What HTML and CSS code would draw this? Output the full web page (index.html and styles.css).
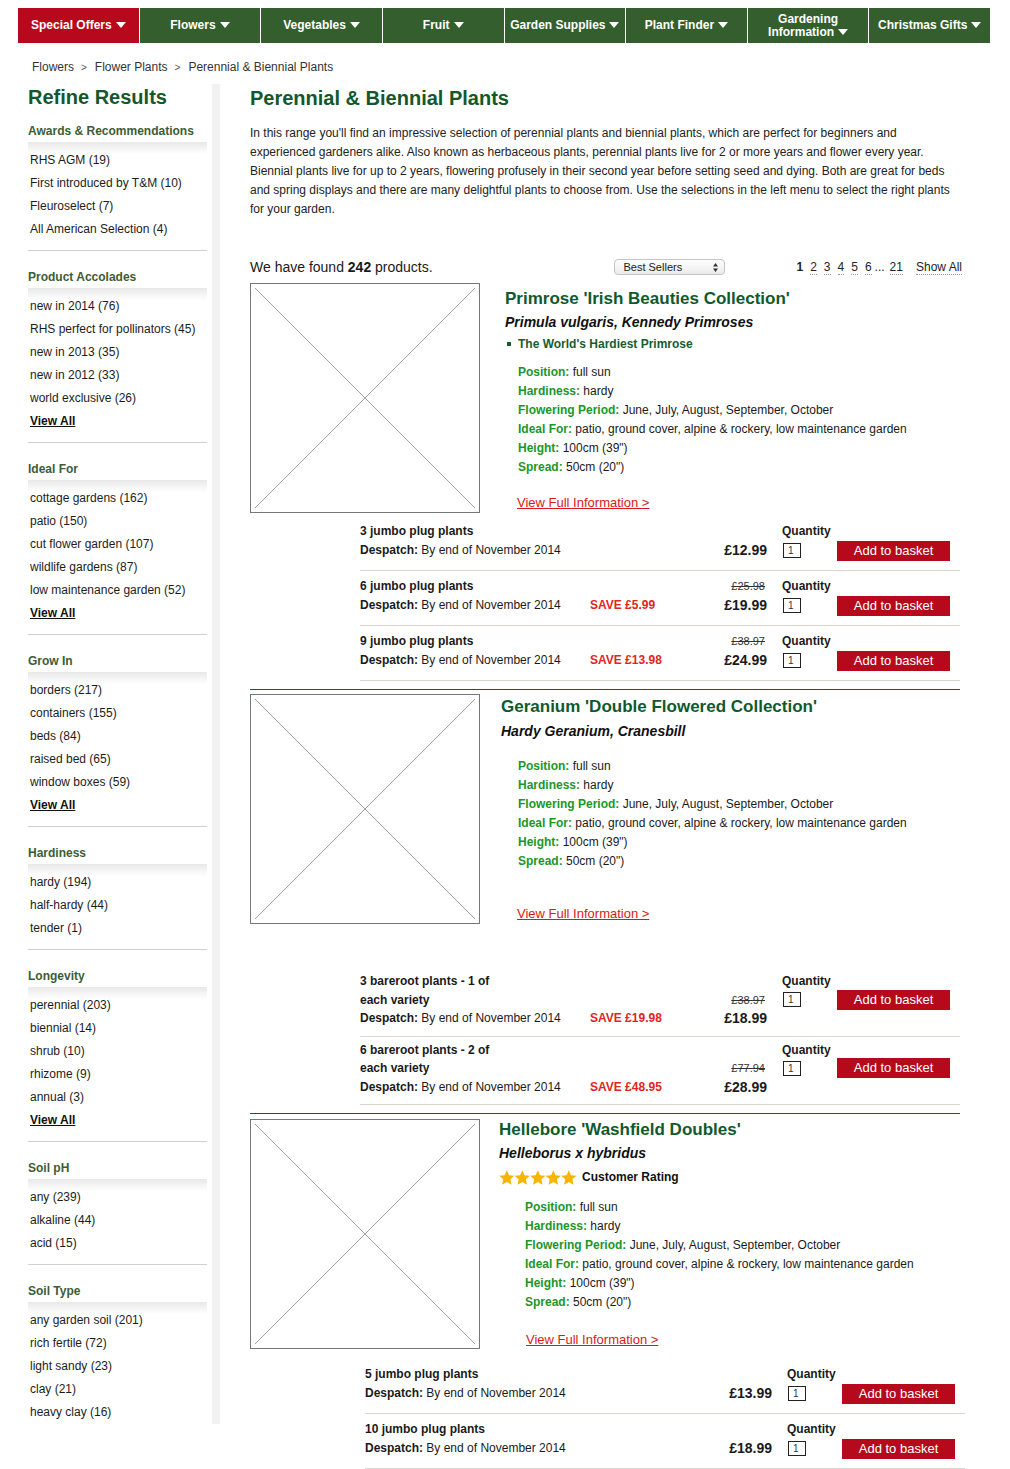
FILE: index.html
```html
<!DOCTYPE html>
<html lang="en">
<head>
<meta charset="utf-8">
<title>Perennial &amp; Biennial Plants</title>
<link rel="stylesheet" href="styles.css">
</head>
<body>
<nav class="topnav">
  <a class="nav-item nav-item--offer" href="#"><span class="nav-label">Special Offers<svg class="caret" viewBox="0 0 10 6"><path d="M0 0h10L5 6z"/></svg></span></a>
  <a class="nav-item" href="#"><span class="nav-label">Flowers<svg class="caret" viewBox="0 0 10 6"><path d="M0 0h10L5 6z"/></svg></span></a>
  <a class="nav-item" href="#"><span class="nav-label">Vegetables<svg class="caret" viewBox="0 0 10 6"><path d="M0 0h10L5 6z"/></svg></span></a>
  <a class="nav-item" href="#"><span class="nav-label">Fruit<svg class="caret" viewBox="0 0 10 6"><path d="M0 0h10L5 6z"/></svg></span></a>
  <a class="nav-item" href="#"><span class="nav-label">Garden Supplies<svg class="caret" viewBox="0 0 10 6"><path d="M0 0h10L5 6z"/></svg></span></a>
  <a class="nav-item" href="#"><span class="nav-label">Plant Finder<svg class="caret" viewBox="0 0 10 6"><path d="M0 0h10L5 6z"/></svg></span></a>
  <a class="nav-item" href="#"><span class="nav-label">Gardening <span class="nowrap">Information<svg class="caret" viewBox="0 0 10 6"><path d="M0 0h10L5 6z"/></svg></span></span></a>
  <a class="nav-item" href="#"><span class="nav-label">Christmas Gifts<svg class="caret" viewBox="0 0 10 6"><path d="M0 0h10L5 6z"/></svg></span></a>
</nav>

<div class="breadcrumb">
  <a href="#">Flowers</a><span class="crumb-sep">&gt;</span><a href="#">Flower Plants</a><span class="crumb-sep">&gt;</span><span>Perennial &amp; Biennial Plants</span>
</div>

<div class="layout">
  <aside class="sidebar">
    <h2 class="sidebar-title">Refine Results</h2>

    <section class="facet">
      <h3 class="facet-title">Awards &amp; Recommendations</h3>
      <ul class="facet-list">
        <li>RHS AGM (19)</li>
        <li>First introduced by T&amp;M (10)</li>
        <li>Fleuroselect (7)</li>
        <li>All American Selection (4)</li>
      </ul>
    </section>

    <section class="facet">
      <h3 class="facet-title">Product Accolades</h3>
      <ul class="facet-list">
        <li>new in 2014 (76)</li>
        <li>RHS perfect for pollinators (45)</li>
        <li>new in 2013 (35)</li>
        <li>new in 2012 (33)</li>
        <li>world exclusive (26)</li>
        <li><a class="view-all" href="#">View All</a></li>
      </ul>
    </section>

    <section class="facet">
      <h3 class="facet-title">Ideal For</h3>
      <ul class="facet-list">
        <li>cottage gardens (162)</li>
        <li>patio (150)</li>
        <li>cut flower garden (107)</li>
        <li>wildlife gardens (87)</li>
        <li>low maintenance garden (52)</li>
        <li><a class="view-all" href="#">View All</a></li>
      </ul>
    </section>

    <section class="facet">
      <h3 class="facet-title">Grow In</h3>
      <ul class="facet-list">
        <li>borders (217)</li>
        <li>containers (155)</li>
        <li>beds (84)</li>
        <li>raised bed (65)</li>
        <li>window boxes (59)</li>
        <li><a class="view-all" href="#">View All</a></li>
      </ul>
    </section>

    <section class="facet">
      <h3 class="facet-title">Hardiness</h3>
      <ul class="facet-list">
        <li>hardy (194)</li>
        <li>half-hardy (44)</li>
        <li>tender (1)</li>
      </ul>
    </section>

    <section class="facet">
      <h3 class="facet-title">Longevity</h3>
      <ul class="facet-list">
        <li>perennial (203)</li>
        <li>biennial (14)</li>
        <li>shrub (10)</li>
        <li>rhizome (9)</li>
        <li>annual (3)</li>
        <li><a class="view-all" href="#">View All</a></li>
      </ul>
    </section>

    <section class="facet">
      <h3 class="facet-title">Soil pH</h3>
      <ul class="facet-list">
        <li>any (239)</li>
        <li>alkaline (44)</li>
        <li>acid (15)</li>
      </ul>
    </section>

    <section class="facet">
      <h3 class="facet-title">Soil Type</h3>
      <ul class="facet-list">
        <li>any garden soil (201)</li>
        <li>rich fertile (72)</li>
        <li>light sandy (23)</li>
        <li>clay (21)</li>
        <li>heavy clay (16)</li>
      </ul>
    </section>
  </aside>

  <main class="content">
    <h1 class="page-title">Perennial &amp; Biennial Plants</h1>
    <p class="intro">In this range you'll find an impressive selection of perennial plants and biennial plants, which are perfect for beginners and experienced gardeners alike. Also known as herbaceous plants, perennial plants live for 2 or more years and flower every year. Biennial plants live for up to 2 years, flowering profusely in their second year before setting seed and dying. Both are great for beds and spring displays and there are many delightful plants to choose from. Use the selections in the left menu to select the right plants for your garden.</p>

    <div class="toolbar">
      <div class="result-count">We have found <b>242</b> products.</div>
      <div class="sort-select"><span>Best Sellers</span><svg class="sort-arrows" viewBox="0 0 5 9"><path d="M0 3.5L2.5 0 5 3.5z M0 5.5L2.5 9 5 5.5z"/></svg></div>
      <div class="pager">
        <span class="pg-current">1</span>
        <a class="pg-link" href="#">2</a>
        <a class="pg-link" href="#">3</a>
        <a class="pg-link" href="#">4</a>
        <a class="pg-link" href="#">5</a>
        <a class="pg-link" href="#">6</a>
        <span class="pg-dots">...</span>
        <a class="pg-link" href="#">21</a>
        <a class="pg-link pg-all" href="#">Show All</a>
      </div>
    </div>

    <!-- Product 1 -->
    <article class="product product--a">
      <div class="product-main">
        <div class="product-img"><svg viewBox="0 0 222 222" preserveAspectRatio="none"><line x1="1" y1="1" x2="221" y2="221"/><line x1="221" y1="1" x2="1" y2="221"/></svg></div>
        <div class="product-info">
          <h2 class="product-title">Primrose 'Irish Beauties Collection'</h2>
          <p class="product-latin">Primula vulgaris, Kennedy Primroses</p>
          <ul class="features"><li>The World's Hardiest Primrose</li></ul>
          <div class="specs">
            <div><span class="spec-label">Position:</span> full sun</div>
            <div><span class="spec-label">Hardiness:</span> hardy</div>
            <div><span class="spec-label">Flowering Period:</span> June, July, August, September, October</div>
            <div><span class="spec-label">Ideal For:</span> patio, ground cover, alpine &amp; rockery, low maintenance garden</div>
            <div><span class="spec-label">Height:</span> 100cm (39")</div>
            <div><span class="spec-label">Spread:</span> 50cm (20")</div>
          </div>
          <a class="more-link" href="#">View Full Information &gt;</a>
        </div>
      </div>
      <div class="options">
        <div class="option">
          <div class="opt-name">3 jumbo plug plants</div>
          <div class="opt-despatch"><b>Despatch:</b> By end of November 2014</div>
          <div class="opt-price">£12.99</div>
          <div class="opt-qty-label">Quantity</div>
          <div class="opt-qty"><span class="qty-box">1</span></div>
          <div class="opt-buy"><button class="btn-basket">Add to basket</button></div>
        </div>
        <div class="option">
          <div class="opt-name">6 jumbo plug plants</div>
          <div class="opt-despatch"><b>Despatch:</b> By end of November 2014</div>
          <div class="opt-save">SAVE £5.99</div>
          <div class="opt-was">£25.98</div>
          <div class="opt-price">£19.99</div>
          <div class="opt-qty-label">Quantity</div>
          <div class="opt-qty"><span class="qty-box">1</span></div>
          <div class="opt-buy"><button class="btn-basket">Add to basket</button></div>
        </div>
        <div class="option">
          <div class="opt-name">9 jumbo plug plants</div>
          <div class="opt-despatch"><b>Despatch:</b> By end of November 2014</div>
          <div class="opt-save">SAVE £13.98</div>
          <div class="opt-was">£38.97</div>
          <div class="opt-price">£24.99</div>
          <div class="opt-qty-label">Quantity</div>
          <div class="opt-qty"><span class="qty-box">1</span></div>
          <div class="opt-buy"><button class="btn-basket">Add to basket</button></div>
        </div>
      </div>
    </article>

    <!-- Product 2 -->
    <article class="product product--b">
      <div class="product-main">
        <div class="product-img"><svg viewBox="0 0 222 222" preserveAspectRatio="none"><line x1="1" y1="1" x2="221" y2="221"/><line x1="221" y1="1" x2="1" y2="221"/></svg></div>
        <div class="product-info">
          <h2 class="product-title">Geranium 'Double Flowered Collection'</h2>
          <p class="product-latin">Hardy Geranium, Cranesbill</p>
          <div class="specs">
            <div><span class="spec-label">Position:</span> full sun</div>
            <div><span class="spec-label">Hardiness:</span> hardy</div>
            <div><span class="spec-label">Flowering Period:</span> June, July, August, September, October</div>
            <div><span class="spec-label">Ideal For:</span> patio, ground cover, alpine &amp; rockery, low maintenance garden</div>
            <div><span class="spec-label">Height:</span> 100cm (39")</div>
            <div><span class="spec-label">Spread:</span> 50cm (20")</div>
          </div>
          <a class="more-link" href="#">View Full Information &gt;</a>
        </div>
      </div>
      <div class="options">
        <div class="option option--tall">
          <div class="opt-name">3 bareroot plants - 1 of each variety</div>
          <div class="opt-despatch"><b>Despatch:</b> By end of November 2014</div>
          <div class="opt-save">SAVE £19.98</div>
          <div class="opt-was">£38.97</div>
          <div class="opt-price">£18.99</div>
          <div class="opt-qty-label">Quantity</div>
          <div class="opt-qty"><span class="qty-box">1</span></div>
          <div class="opt-buy"><button class="btn-basket">Add to basket</button></div>
        </div>
        <div class="option option--tall">
          <div class="opt-name">6 bareroot plants - 2 of each variety</div>
          <div class="opt-despatch"><b>Despatch:</b> By end of November 2014</div>
          <div class="opt-save">SAVE £48.95</div>
          <div class="opt-was">£77.94</div>
          <div class="opt-price">£28.99</div>
          <div class="opt-qty-label">Quantity</div>
          <div class="opt-qty"><span class="qty-box">1</span></div>
          <div class="opt-buy"><button class="btn-basket">Add to basket</button></div>
        </div>
      </div>
    </article>

    <!-- Product 3 -->
    <article class="product product--c">
      <div class="product-main">
        <div class="product-img"><svg viewBox="0 0 222 222" preserveAspectRatio="none"><line x1="1" y1="1" x2="221" y2="221"/><line x1="221" y1="1" x2="1" y2="221"/></svg></div>
        <div class="product-info">
          <h2 class="product-title">Hellebore 'Washfield Doubles'</h2>
          <p class="product-latin">Helleborus x hybridus</p>
          <div class="rating">
            <svg class="stars" viewBox="0 0 78 15">
              <polygon id="star" points="7.8,0.2 10.03,5.13 15.41,5.73 11.41,9.37 12.5,14.67 7.8,12 3.1,14.67 4.19,9.37 0.19,5.73 5.57,5.13"/>
              <use href="#star" x="15.5"/>
              <use href="#star" x="31"/>
              <use href="#star" x="46.5"/>
              <use href="#star" x="62"/>
            </svg>
            <span class="rating-text">Customer Rating</span>
          </div>
          <div class="specs">
            <div><span class="spec-label">Position:</span> full sun</div>
            <div><span class="spec-label">Hardiness:</span> hardy</div>
            <div><span class="spec-label">Flowering Period:</span> June, July, August, September, October</div>
            <div><span class="spec-label">Ideal For:</span> patio, ground cover, alpine &amp; rockery, low maintenance garden</div>
            <div><span class="spec-label">Height:</span> 100cm (39")</div>
            <div><span class="spec-label">Spread:</span> 50cm (20")</div>
          </div>
          <a class="more-link" href="#">View Full Information &gt;</a>
        </div>
      </div>
      <div class="options">
        <div class="option">
          <div class="opt-name">5 jumbo plug plants</div>
          <div class="opt-despatch"><b>Despatch:</b> By end of November 2014</div>
          <div class="opt-price">£13.99</div>
          <div class="opt-qty-label">Quantity</div>
          <div class="opt-qty"><span class="qty-box">1</span></div>
          <div class="opt-buy"><button class="btn-basket">Add to basket</button></div>
        </div>
        <div class="option">
          <div class="opt-name">10 jumbo plug plants</div>
          <div class="opt-despatch"><b>Despatch:</b> By end of November 2014</div>
          <div class="opt-price">£18.99</div>
          <div class="opt-qty-label">Quantity</div>
          <div class="opt-qty"><span class="qty-box">1</span></div>
          <div class="opt-buy"><button class="btn-basket">Add to basket</button></div>
        </div>
      </div>
    </article>
  </main>
</div>
</body>
</html>
```

FILE: styles.css
```css
* { box-sizing: border-box; }

html, body {
  margin: 0;
  padding: 0;
  background: #fff;
}

body {
  font-family: "Liberation Sans", Arial, Helvetica, sans-serif;
  font-size: 12px;
  color: #1a1a1a;
}

a { color: inherit; text-decoration: none; }

/* ---------- top navigation ---------- */
.topnav {
  display: flex;
  gap: 1px;
  height: 35px;
  margin: 8px 20px 0 18px;
}

.nav-item {
  flex: 1 1 0;
  display: flex;
  align-items: center;
  justify-content: center;
  padding: 0 4px;
  background: #345e2e;
  color: #fff;
  font-weight: bold;
  font-size: 12px;
  line-height: 13px;
  text-align: center;
}

.nav-item--offer { background: #b8091c; }

.nowrap { white-space: nowrap; }

.caret {
  width: 10px;
  height: 6px;
  margin-left: 4px;
  fill: #fff;
  vertical-align: 1px;
}

/* ---------- breadcrumb ---------- */
.breadcrumb {
  margin-top: 16px;
  padding-left: 32px;
  font-size: 12px;
  line-height: 16px;
  color: #333;
}

.crumb-sep {
  margin: 0 8px 0 7px;
  font-size: 10px;
  color: #555;
}

/* ---------- layout ---------- */
.layout {
  display: flex;
  align-items: flex-start;
  margin-top: 8px;
}

/* ---------- sidebar ---------- */
.sidebar {
  flex: none;
  width: 192px;
  margin-left: 28px;
  padding: 1px 5px 0 0;
  border-right: 8px solid #f1f1f1;
}

.sidebar-title {
  margin: 0;
  font-size: 20px;
  line-height: 24px;
  color: #12582b;
}

.facet {
  padding-top: 18px;
  border-bottom: 1px solid #d0d0d0;
}

.facet:first-of-type { padding-top: 14px; }
.facet:last-child { border-bottom: 0; }

.facet-title {
  margin: 0 0 3px;
  font-size: 12px;
  line-height: 16px;
  color: #3c5d35;
}

.facet-list {
  list-style: none;
  margin: 0;
  padding: 7px 0 9px 2px;
  background: linear-gradient(#e8e8e8, #fff) no-repeat 0 0 / 100% 12px;
}

.facet:last-child .facet-list { padding-bottom: 0; }

.facet-list li {
  line-height: 23px;
  color: #1c1c1c;
}

.view-all {
  font-weight: bold;
  text-decoration: underline;
  color: #111;
}

/* ---------- main content ---------- */
.content {
  flex: none;
  width: 710px;
  margin-left: 30px;
  padding-top: 2px;
}

.page-title {
  margin: 0;
  font-size: 20px;
  line-height: 24px;
  color: #12582b;
}

.intro {
  margin: 14px 0 0;
  line-height: 19px;
  color: #222;
}

.toolbar {
  display: flex;
  align-items: center;
  width: 712px;
  height: 22px;
  margin-top: 37px;
}

.result-count { font-size: 14px; color: #1a1a1a; }

.sort-select {
  display: flex;
  align-items: center;
  justify-content: space-between;
  width: 111px;
  height: 16px;
  margin-left: auto;
  padding: 0 6px 0 8px;
  border: 1px solid #c6c6c6;
  border-radius: 4px;
  background: linear-gradient(#fdfdfd, #ebebeb);
  font-size: 11px;
  color: #222;
}

.sort-arrows { width: 5px; height: 9px; fill: #333; }

.pager {
  display: flex;
  align-items: center;
  gap: 7px;
  margin-left: 71px;
  font-size: 12px;
  line-height: 14px;
  color: #222;
}

.pg-current { font-weight: bold; }

.pg-link { border-bottom: 1px dotted #999; }

.pg-dots { margin: 0 -2px 0 -4px; }

.pg-all { margin-left: 6px; }

/* ---------- product ---------- */
.product--a { margin-top: 5px; }

.product + .product {
  margin-top: 8px;
  border-top: 1px solid #1b5a30;
}

.product-main {
  display: flex;
  align-items: flex-start;
}

.product--b .product-main { padding-top: 4px; }
.product--c .product-main { padding-top: 5px; }

.product-img {
  flex: none;
  width: 230px;
  height: 230px;
  padding: 3px;
  border: 1px solid #777;
  background: #fff;
}

.product-img svg {
  display: block;
  width: 100%;
  height: 100%;
  stroke: #8c8c8c;
  stroke-width: 0.8;
}

.product-info { padding: 5px 0 0 25px; }
.product--b .product-info { padding: 2px 0 0 21px; }
.product--c .product-info { padding: 0 0 0 19px; }

.product-title {
  margin: 0;
  font-size: 17px;
  line-height: 22px;
  color: #0f5a2d;
}

.product-latin {
  margin: 2px 0 0;
  font-size: 14px;
  line-height: 20px;
  font-weight: bold;
  font-style: italic;
  color: #111;
}

.product--b .product-latin { margin-top: 3px; }

.features {
  list-style: none;
  margin: 3px 0 0 2px;
  padding: 0;
}

.features li {
  display: flex;
  align-items: center;
  line-height: 18px;
  font-weight: bold;
  color: #185c30;
}

.features li::before {
  content: "";
  width: 4px;
  height: 4px;
  margin-right: 7px;
  background: #1a5e30;
}

.rating {
  display: flex;
  align-items: center;
  height: 18px;
  margin-top: 5px;
}

.stars { width: 78px; height: 15px; fill: #f7b500; }

.rating-text {
  margin-left: 5px;
  font-weight: bold;
  color: #111;
}

.specs {
  margin: 10px 0 0 13px;
  line-height: 19px;
  color: #1a1a1a;
}

.product--b .specs { margin: 16px 0 0 17px; }
.product--c .specs { margin: 12px 0 0 26px; }

.spec-label {
  font-weight: bold;
  color: #20962a;
}

.more-link {
  display: block;
  width: fit-content;
  margin: 17px 0 0 12px;
  font-size: 13px;
  line-height: 18px;
  color: #d71920;
  text-decoration: underline;
}

.product--b .more-link { margin: 34px 0 0 16px; }
.product--c .more-link { margin: 19px 0 0 27px; }

/* ---------- purchase options ---------- */
.options {
  width: 600px;
  margin: 3px 0 0 110px;
}

.product--b .options { margin-top: 44px; }
.product--c .options { margin: 10px 0 0 115px; }

.option {
  display: grid;
  grid-template-columns: 230px 110px 67px 70px 113px;
  grid-template-rows: 19px 19px;
  padding: 6px 0 10px;
  border-bottom: 1px solid #dad6cf;
  line-height: 19px;
  color: #1a1a1a;
}

.option--tall {
  grid-template-rows: 18.5px 18.5px 18.5px;
  padding: 4px 0 8px;
  line-height: 18.5px;
}

.opt-name { grid-area: 1 / 1; font-weight: bold; }
.opt-despatch { grid-area: 2 / 1; white-space: nowrap; }

.opt-save {
  grid-area: 2 / 2;
  font-weight: bold;
  color: #e1261c;
}

.opt-was {
  grid-area: 1 / 3;
  padding-right: 2px;
  text-align: right;
  font-size: 11px;
  text-decoration: line-through;
  color: #333;
}

.opt-price {
  grid-area: 2 / 3;
  text-align: right;
  font-size: 14px;
  font-weight: bold;
}

.opt-qty-label {
  grid-area: 1 / 4;
  padding-left: 15px;
  font-weight: bold;
}

.opt-qty {
  grid-area: 2 / 4;
  display: flex;
  align-items: center;
  padding-left: 16px;
}

.qty-box {
  width: 18px;
  height: 15px;
  padding-left: 4px;
  border: 1px solid #222;
  font-size: 10px;
  line-height: 13px;
  color: #333;
  background: #fff;
}

.opt-buy {
  grid-area: 2 / 5;
  display: flex;
  align-items: center;
}

.btn-basket {
  flex: none;
  width: 113px;
  height: 20px;
  padding: 0;
  border: 0;
  background: #b7091c;
  color: #fff;
  font-family: "Liberation Sans", Arial, sans-serif;
  font-size: 13px;
  line-height: 20px;
}

.option--tall .opt-name { grid-row: 1 / 3; max-width: 145px; }
.option--tall .opt-despatch,
.option--tall .opt-save,
.option--tall .opt-price { grid-row: 3; }
.option--tall .opt-was,
.option--tall .opt-qty,
.option--tall .opt-buy { grid-row: 2; }
```
